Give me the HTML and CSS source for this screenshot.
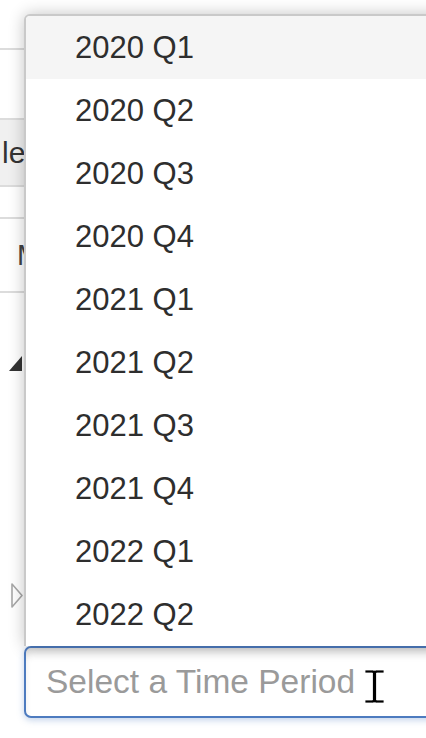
FILE: index.html
```
<!DOCTYPE html>
<html>
<head>
<meta charset="utf-8">
<link rel="stylesheet" href="styles.css">
</head>
<body>
<div class="page">
  <div class="row row-a"></div>
  <div class="row row-b"></div>
  <div class="row row-c"><span class="cell-text">le</span></div>
  <div class="row row-d"></div>
  <div class="row row-e"><span class="cell-text cell-m">M</span></div>
  <div class="tree">
    <div class="node node-open">
      <svg class="tw tw-open" width="13" height="15" viewBox="0 0 13 15"><polygon points="13,0 13,15 0,15" fill="#333"/></svg>
    </div>
    <div class="node node-closed">
      <svg class="tw tw-closed" width="12" height="25" viewBox="0 0 12 25"><polygon points="1,1 11,12.5 1,24" fill="none" stroke="#a8a8a8" stroke-width="1.6" stroke-linejoin="round"/></svg>
    </div>
  </div>
  <div class="combo">
    <ul class="menu">
      <li class="item item-hover">2020 Q1</li>
      <li class="item">2020 Q2</li>
      <li class="item">2020 Q3</li>
      <li class="item">2020 Q4</li>
      <li class="item">2021 Q1</li>
      <li class="item">2021 Q2</li>
      <li class="item">2021 Q3</li>
      <li class="item">2021 Q4</li>
      <li class="item">2022 Q1</li>
      <li class="item">2022 Q2</li>
    </ul>
    <input class="combo-input" type="text" placeholder="Select a Time Period">
    <svg class="ibeam" width="21" height="35" viewBox="0 0 21 35">
      <path d="M1 1 H8.5 Q10.5 1.6 12.5 1 H20 V4 H12.5 V31 H20 V34 H12.5 Q10.5 33.4 8.5 34 H1 V31 H8.5 V4 H1 Z" fill="#000" stroke="#fff" stroke-width="0.8"/>
    </svg>
  </div>
</div>
</body>
</html>
```
FILE: styles.css
```
html, body {
  margin: 0;
  padding: 0;
  overflow: hidden;
  background: #ffffff;
}
body {
  font-family: "Liberation Sans", Arial, sans-serif;
  color: #333333;
  width: 426px;
  height: 738px;
}
.page {
  width: 426px;
  height: 738px;
  overflow: hidden;
}
.row {
  border-bottom: 2px solid #dcdcdc;
  display: flex;
  align-items: center;
  box-sizing: content-box;
}
.row-a { height: 48px; }
.row-b { height: 68px; }
.row-c { height: 65px; background: #f0f0f0; }
.row-d { height: 30px; }
.row-e { height: 72px; }
.cell-text {
  font-size: 30px;
  color: #333;
  padding-left: 2px;
  white-space: nowrap;
}
.cell-m {
  font-size: 29px;
  padding-left: 17px;
  color: #444;
}
.tree {
  height: 353px;
  display: flex;
  flex-direction: column;
}
.node { display: flex; }
.node-open { padding: 63px 0 0 9px; }
.node-closed { padding: 212px 0 0 11px; }
.tw { display: block; }
.combo {
  position: relative;
  margin-left: 24px;
  margin-right: -30px;
}
.menu {
  position: absolute;
  left: 0;
  right: 0;
  bottom: 100%;
  margin: 0;
  padding: 0;
  list-style: none;
  background: #fff;
  border: 2px solid #c9c9c9;
  border-bottom: none;
  border-radius: 6px 6px 0 0;
  box-shadow: 0 0 16px rgba(0, 0, 0, 0.24);
  z-index: 2;
}
.item {
  height: 63px;
  line-height: 63px;
  padding-left: 49px;
  font-size: 31px;
  color: #2e2e2e;
}
.item-hover { background: #f5f5f5; border-radius: 4px 0 0 0; }
.combo-input {
  display: block;
  box-sizing: border-box;
  width: 100%;
  height: 72px;
  margin: 0;
  border: 2px solid #4d7bbf;
  border-radius: 7px;
  padding: 0 0 0 20px;
  font-family: "Liberation Sans", Arial, sans-serif;
  font-size: 33.5px;
  color: #333;
  background: #fff;
  outline: none;
  box-shadow: inset 0 7px 9px -3px rgba(0, 0, 0, 0.16), 0 2px 7px rgba(77, 123, 191, 0.35);
}
.combo-input::placeholder {
  color: #9a9a9a;
  opacity: 1;
}
.ibeam {
  position: absolute;
  left: 340px;
  top: 23px;
  z-index: 3;
}
```
